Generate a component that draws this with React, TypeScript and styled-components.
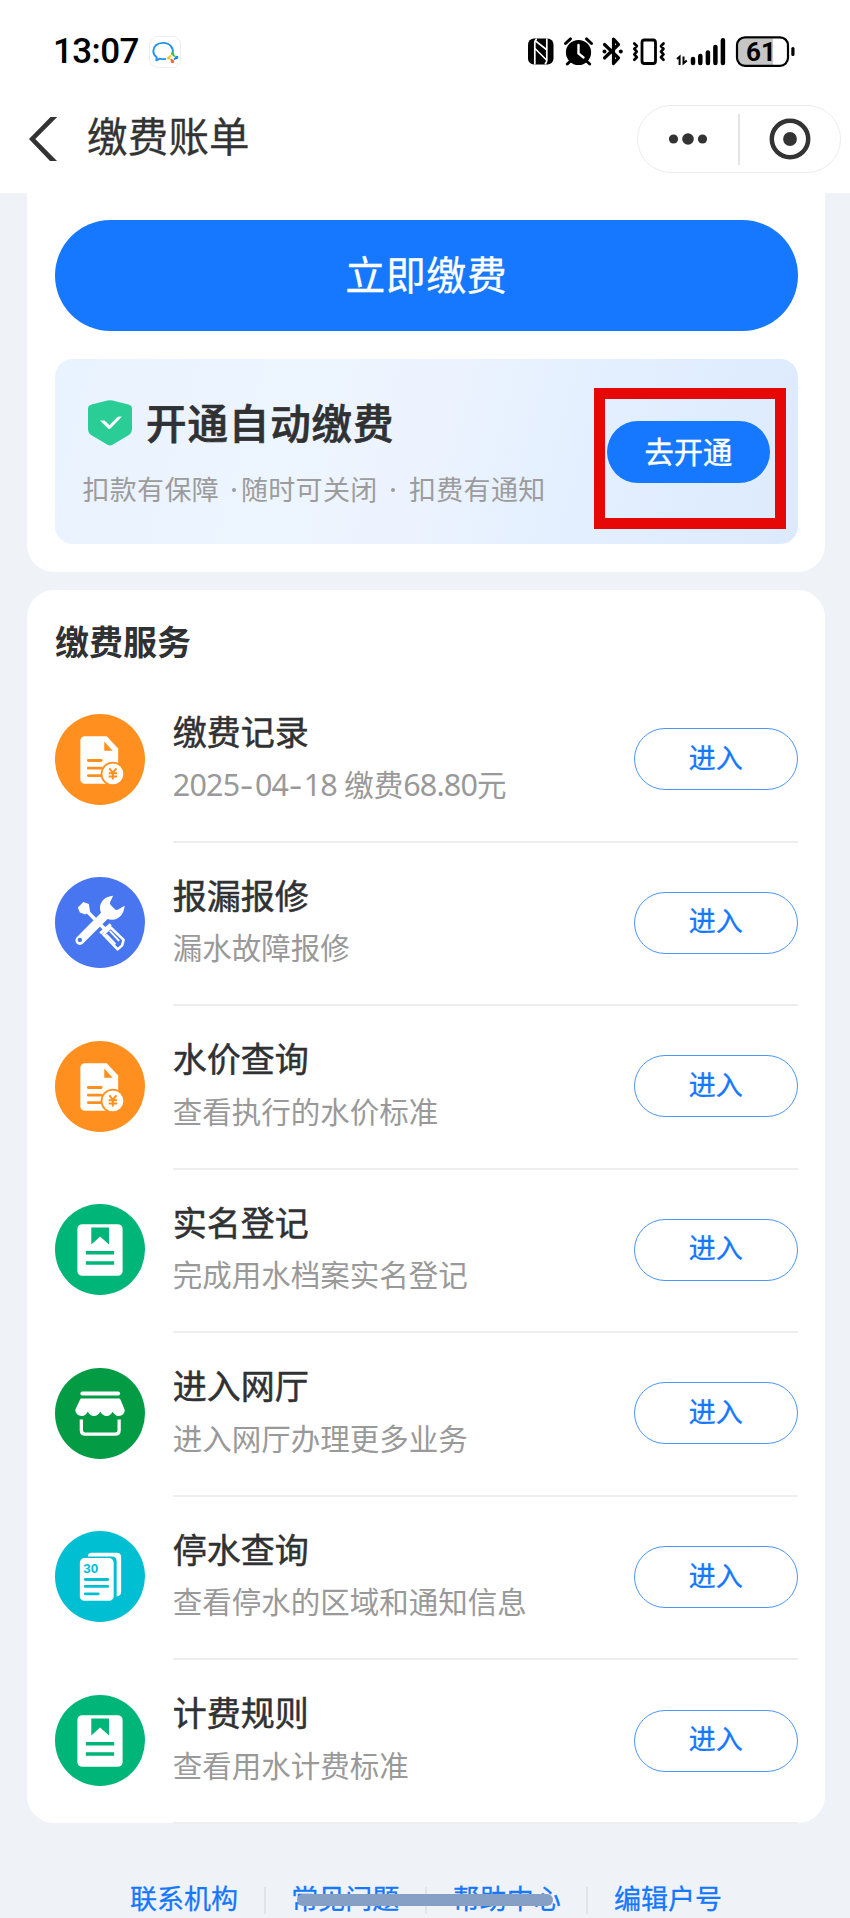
import React from 'react';
import styled, { createGlobalStyle } from 'styled-components';

const GlobalStyle = createGlobalStyle`
  *, *::before, *::after { box-sizing: border-box; }
  html, body { margin: 0; padding: 0; }
  body {
    background: #eff3f8;
    font-family: 'Noto Sans CJK SC', sans-serif;
    color: #303133;
    overflow: hidden;
  }
`;

const Page = styled.div`
  position: relative;
  width: 850px;
  height: 1918px;
  overflow: hidden;
  background: #eff3f8;
`;

const Header = styled.header`
  height: 193px;
  background: #fff;
`;

const StatusBar = styled.div`
  height: 104.5px;
  display: flex;
  align-items: center;
  padding: 0 55px 0 53px;
`;

const Clock = styled.div`
  font-family: Roboto, sans-serif;
  font-weight: 500;
  font-size: 35px;
  line-height: 40px;
  letter-spacing: -0.6px;
  width: 96px;
  white-space: nowrap;
  color: #000;
`;

const StatusIcons = styled.div`
  display: flex;
  align-items: center;
  margin-left: auto;
`;

const NavBar = styled.div`
  height: 69px;
  display: flex;
  align-items: center;
  padding: 0 9px 0 29px;
`;

const NavTitle = styled.h1`
  margin: 0 0 0 29px;
  padding-bottom: 8px;
  font-weight: 400;
  font-size: 40.5px;
  line-height: 60px;
  letter-spacing: 0.2px;
  color: #333;
  -webkit-text-stroke: 0.3px #333;
`;

const Capsule = styled.div`
  margin-left: auto;
  width: 204px;
  height: 68px;
  border: 1.5px solid #ececec;
  border-radius: 34px;
  display: flex;
  align-items: center;
`;

const CapsuleHalf = styled.div`
  flex: 1;
  display: flex;
  align-items: center;
  justify-content: center;
`;

const CapsuleLine = styled.div`
  width: 1.5px;
  height: 51px;
  background: #e4e4e4;
`;

const PayCard = styled.section`
  margin: 0 25px 0 27px;
  padding: 27px 27.5px 28px 28px;
  background: #fff;
  border-radius: 0 0 27px 27px;
  height: 378.5px;
`;

const PayButton = styled.button`
  display: block;
  width: 100%;
  height: 111px;
  margin: 0 0 28px;
  padding: 0 0 6px;
  border: 0;
  border-radius: 56px;
  background: #1677ff;
  color: #fff;
  font: 400 40px/60px 'Noto Sans CJK SC', sans-serif;
  letter-spacing: 0.5px;
  -webkit-text-stroke: 0.3px #fff;
`;

const Banner = styled.div`
  position: relative;
  height: 184.5px;
  border-radius: 18px;
  background: linear-gradient(105deg, #e9f2ff 0%, #edf5ff 32%, #ecf3fe 50%, #e4f0ff 68%, #dceafd 100%);
  display: flex;
  justify-content: space-between;
  padding-right: 27.3px;
`;

const BannerText = styled.div`
  padding: 34px 0 0 27.5px;
`;

const BannerHead = styled.div`
  display: flex;
  align-items: center;
  gap: 14px;
  height: 60px;
  padding-left: 5.5px;
`;

const BannerTitle = styled.h2`
  margin: 0;
  padding-bottom: 3px;
  font-weight: 500;
  font-size: 40.5px;
  line-height: 57px;
  letter-spacing: 0.9px;
  -webkit-text-stroke: 0.7px #303133;
`;

const BannerNotes = styled.div`
  display: flex;
  margin-top: 15.5px;
  font-size: 27px;
  line-height: 40px;
  letter-spacing: 0.3px;
  color: #9c9c9c;
`;

const NoteDot = styled.i<{ $before: number; $after: number }>`
  width: 4px;
  height: 4px;
  border-radius: 50%;
  background: #9c9c9c;
  margin: 19px ${(p) => p.$after}px 0 ${(p) => p.$before}px;
`;

const OpenButton = styled.button`
  width: 163.5px;
  height: 61.5px;
  margin-top: 62px;
  padding: 0 0 4px;
  border: 0;
  border-radius: 31px;
  background: #1677ff;
  color: #fff;
  font: 400 29.3px/50px 'Noto Sans CJK SC', sans-serif;
  -webkit-text-stroke: 0.4px #fff;
`;

const Highlight = styled.div`
  position: absolute;
  left: 539px;
  top: 28.5px;
  width: 192px;
  height: 141.5px;
  border: 11.5px solid #e60707;
`;

const ServiceCard = styled.section`
  margin: 18.5px 25px 0 27px;
  height: 1232.5px;
  padding: 0 27.5px 0 28px;
  background: #fff;
  border-radius: 27px;
`;

const ServiceHeading = styled.h2`
  margin: 0;
  height: 89.2px;
  padding-top: 34px;
  font-weight: 700;
  font-size: 34px;
  line-height: 34px;
`;

const Row = styled.div`
  display: flex;
  align-items: flex-start;
  height: 163.55px;
`;

const IconCircle = styled.div<{ $color: string }>`
  width: 90px;
  height: 91px;
  flex: none;
  margin-top: 34.5px;
  border-radius: 50%;
  background: ${(p) => p.$color};
  svg { display: block; width: 90px; height: 91px; }
`;

const RowBody = styled.div`
  flex: 1;
  height: 163.5px;
  margin-left: 27.8px;
  display: flex;
  justify-content: space-between;
  border-bottom: 2px solid #eee;
`;

const RowText = styled.div`
  padding-top: 28px;
`;

const RowTitle = styled.div`
  font-weight: 400;
  font-size: 34px;
  line-height: 48px;
  -webkit-text-stroke: 0.5px #303133;
`;

const RowNote = styled.div`
  margin-top: 7.5px;
  font-size: 29.5px;
  line-height: 40px;
  color: #999;
  white-space: nowrap;
`;

const Figures = styled.span`
  font-family: 'Noto Sans', 'Noto Sans CJK SC', sans-serif;
  font-size: 30.5px;
  line-height: 0;
  letter-spacing: -0.8px;
`;

const DateDash = styled.span`
  display: inline-block;
  width: 15.5px;
  text-align: center;
  letter-spacing: 0;
  transform: scaleX(1.35);
`;

const EnterButton = styled.button`
  width: 163.5px;
  height: 62px;
  margin-top: 49.1px;
  padding: 0 0 5px;
  border: 1.5px solid #4b95f8;
  border-radius: 32px;
  background: #fff;
  color: #1677ff;
  font: 400 27px/50px 'Noto Sans CJK SC', sans-serif;
  -webkit-text-stroke: 0.3px #1677ff;
`;

const Footer = styled.footer`
  display: flex;
  justify-content: center;
  margin-top: 55.5px;
  padding-left: 2px;
`;

const FooterLink = styled.a`
  width: 161.3px;
  text-align: center;
  font-size: 27px;
  line-height: 40px;
  color: #1677ff;
  -webkit-text-stroke: 0.3px #1677ff;
  position: relative;
  & + &::before {
    content: '';
    position: absolute;
    left: -1px;
    top: 9px;
    width: 2px;
    height: 27px;
    background: #e2e4e8;
  }
`;

const HomeIndicator = styled.div`
  position: absolute;
  left: 296.5px;
  top: 1894px;
  width: 256px;
  height: 11.5px;
  border-radius: 6px;
  background: #86a0c5;
`;

const ChatAppIcon = () => (
  <svg width="32" height="32" viewBox="0 0 32 32">
    <rect x="0.5" y="0.5" width="31" height="31" rx="8.5" fill="#fff" stroke="#ededed" />
    <path
      d="M23.6 17.2C24.9 12 21 6.9 14 6.9 8 6.9 4.3 10.6 4.3 15c0 2.600 1.300 4.800 3.400 6.200L7.300 24.300l3.500-1.700c2 .6 4.200.7 6.200.3"
      fill="none"
      stroke="#2590ee"
      strokeWidth="1.9"
      strokeLinejoin="round"
    />
    <g strokeWidth="1.900" strokeLinecap="round" fill="none">
      <path d="M23.200 17.800l2 2" stroke="#3ec23a" />
      <path d="M28 20.900l-2.400 2.200" stroke="#2384ea" />
      <path d="M24 25.600l-1.800-2" stroke="#f7642c" />
      <path d="M19.400 22.200l2-2.200" stroke="#fdc51d" />
    </g>
    <circle cx="23.600" cy="17.600" r="1.500" fill="#3ec23a" />
    <circle cx="27.600" cy="21.400" r="1.700" fill="#2384ea" />
    <circle cx="23.500" cy="25.500" r="1.700" fill="#f7642c" />
    <circle cx="19.600" cy="21.900" r="1.500" fill="#fdc51d" />
  </svg>
);

const StatusGlyphs = () => (
  <svg width="268" height="32" viewBox="527 37 268 32">
    <rect x="528" y="39.500" width="25.500" height="26" rx="6" fill="#000" />
    <path d="M534.800 65.500V43.500q0-2.500 2-3.500M546.800 39.500V61q0 3-2 4" fill="none" stroke="#fff" strokeWidth="1.700" />
    <path d="M535 41.500L547 51M535 49.500l12 12" stroke="#fff" strokeWidth="1.600" />
    <circle cx="578.500" cy="53.500" r="12.600" fill="#000" />
    <path d="M565.500 44.500l5-4.600M591.500 44.500l-5-4.600M570.500 62l-3.200 3M586.500 62l3.200 3" stroke="#000" strokeWidth="3" strokeLinecap="round" />
    <path d="M578.500 46v8.500l5 4" fill="none" stroke="#fff" strokeWidth="2.400" strokeLinecap="round" />
    <path d="M604.500 45.500l14 13.500-5 5.500V40l5 5.500-14 13.500" fill="none" stroke="#000" strokeWidth="3.200" strokeLinejoin="round" strokeLinecap="round" />
    <circle cx="604.500" cy="52.600" r="2" fill="#000" />
    <circle cx="620.800" cy="52.600" r="2" fill="#000" />
    <rect x="642" y="41" width="13.500" height="23.500" rx="2.500" fill="none" stroke="#000" strokeWidth="2.800" />
    <path
      d="M634.300 44.500l2.500 2.500-2.500 2.800 2.500 2.800-2.500 2.800 2.500 2.800-2.500 2.600M663.500 44.500l-2.500 2.500 2.500 2.800-2.500 2.800 2.500 2.800-2.500 2.800 2.500 2.600"
      fill="none"
      stroke="#000"
      strokeWidth="2.700"
      strokeLinejoin="round"
      strokeLinecap="round"
    />
    <path d="M677 60l2.600-2.300V66M686.800 61.500l-3.300 2.800V57.500" fill="none" stroke="#000" strokeWidth="2" />
    <g stroke="#000" strokeWidth="4.500" strokeLinecap="round">
      <path d="M693 60v4M700.300 57v7M707.900 53.500V64M715.400 48v16M722.900 41.300V64" />
    </g>
    <path d="M745 39.500h28v27h-28a7 7 0 0 1-7-7v-13a7 7 0 0 1 7-7z" fill="#c6c6c6" />
    <rect x="737" y="38.300" width="51" height="28.500" rx="8" fill="none" stroke="#000" strokeWidth="2.200" />
    <rect x="791.300" y="48" width="3.200" height="9" rx="1.500" fill="#000" />
    <text x="761" y="61.700" textAnchor="middle" fontFamily="Roboto, sans-serif" fontWeight="700" fontSize="26">
      61
    </text>
  </svg>
);

const BackIcon = () => (
  <svg width="29" height="44" viewBox="0 0 29 44">
    <path d="M21.500 0H28.200L6.300 22 28 44H21L0 22z" fill="#333" />
  </svg>
);

const MoreIcon = () => (
  <svg width="40" height="14" viewBox="0 0 40 14" fill="#333">
    <circle cx="5.500" cy="7" r="4.600" />
    <circle cx="20" cy="7" r="5.800" />
    <circle cx="34.500" cy="7" r="4.600" />
  </svg>
);

const TargetIcon = () => (
  <svg width="42" height="42" viewBox="0 0 42 42">
    <circle cx="21" cy="21" r="18.200" fill="none" stroke="#333" strokeWidth="4.500" />
    <circle cx="21" cy="21" r="6.900" fill="#333" />
  </svg>
);

const ShieldIcon = () => (
  <svg width="44" height="46" viewBox="0 0 44 46">
    <path d="M19.500.6q2.500-.9 5 0L40.500 4.600Q44 5.600 44 9v19.500q0 4.500-3.500 6.800L24.500 44.800q-2.500 1.500-5 0L3.500 35.300Q0 33 0 28.500V9Q0 5.600 3.500 4.600z" fill="#2bcd96" />
    <path d="M12 20.500h4.500l5 4.700 7.500-7.700q1-1 2.500-1h2.500L22.500 28.500q-1.200 1-2.400 0z" fill="#fff" />
  </svg>
);

const BillIcon = () => (
  <svg viewBox="0 0 90.5 91">
    <path d="M30 22h22L63.500 34.500V70H30a4.500 4.500 0 0 1-4.500-4.500v-39A4.500 4.500 0 0 1 30 22z" fill="#fff" />
    <path d="M49.500 27.500v9.300h8.500z" fill="#ff9020" />
    <path d="M33.500 46.500h13M33.500 54.200h13M33.500 61.700h13" stroke="#ff9020" strokeWidth="2.800" strokeLinecap="round" />
    <circle cx="58.200" cy="60" r="12.300" fill="#ff9020" />
    <circle cx="58.200" cy="60" r="10.500" fill="#fff" />
    <path d="M54.600 54.500l3.600 4.200 3.600-4.200M54 59.300h8.400M54 62.600h8.400M58.200 58.500v7" fill="none" stroke="#ff9020" strokeWidth="2" />
  </svg>
);

const ToolsIcon = () => (
  <svg viewBox="0 0 90.5 91">
    <path d="M30 32L56 58" fill="none" stroke="#fff" strokeWidth="3.600" />
    <path d="M23 30.500l5.500-5.500 5.500 1.800 1.300 7.700-5 3-5.300-2z" fill="#fff" />
    <path d="M25 63.500L50 38.500" stroke="#fff" strokeWidth="9" strokeLinecap="round" />
    <path d="M58.500 18.500c-8 .5-13 5.500-13.300 12-.2 7 5.500 12.500 12.500 12.200 6.200-.2 11.800-5.300 12.300-14l-6.500 3.800q-2 1-3.500-.5l-4-4q-1.500-1.500-.3-3.500z" fill="#fff" />
    <circle cx="25" cy="63" r="2.200" fill="#4876f0" />
    <path d="M48.500 57.500l7.500-7L69 63l-1.500 5.500-4.500 4z" fill="#4876f0" stroke="#fff" strokeWidth="2.600" strokeLinejoin="round" />
    <path d="M45.500 56.500l10.500-9" stroke="#fff" strokeWidth="3" />
    <path d="M55.500 54.500l8.500 9M51.800 57.800l8.500 9" stroke="#fff" strokeWidth="1.900" strokeLinecap="round" />
  </svg>
);

const BookIcon = () => (
  <svg viewBox="0 0 90.5 91">
    <rect x="22.500" y="20" width="45.500" height="52" rx="5" fill="#fff" />
    <path d="M36.500 23.500h17.800v17L45.400 32.500l-8.900 8z" fill="#00b578" />
    <path d="M31 48.700h28.500M31 59h28.500" stroke="#00b578" strokeWidth="3.500" />
  </svg>
);

const ShopIcon = () => (
  <svg viewBox="0 0 90.5 91">
    <rect x="25.500" y="23.500" width="40" height="4" rx="2" fill="#fff" />
    <path d="M27 30.500h37q1.500 0 2 1.500l4 9.500c.5 4-2.500 6.500-6 6.500-3 0-4.500-2-6-4.300-1.500 2.300-3.300 4.300-6 4.300-3 0-5-2-6.500-4.300C44 46 42 48 39.300 48c-3 0-4.800-2-6.300-4.300C31.500 46 30 48 27 48c-3.500 0-6.800-2.500-6.500-6.500L25 32q.5-1.500 2-1.500z" fill="#fff" />
    <path d="M26.500 51.500v10.800q0 4 4 4h30q4 0 4-4V51.500" fill="none" stroke="#fff" strokeWidth="3.300" />
  </svg>
);

const NoticeIcon = () => (
  <svg viewBox="0 0 90.5 91">
    <path d="M33 25.500q0-4 4-4h25q4.500 0 4.500 4.500v35q0 4-4.500 4.500V30.500q0-5-5-5z" fill="#fff" />
    <rect x="25" y="27" width="34" height="43" rx="4.500" fill="#fff" />
    <text x="36" y="42.300" textAnchor="middle" fontFamily="Liberation Sans, Arial, sans-serif" fontWeight="700" fontSize="13.500" fill="#00bfd3">
      30
    </text>
    <path d="M30.500 48.500h22.500M30.500 55.500h22.500M30.500 63h13" stroke="#00bfd3" strokeWidth="2.800" strokeLinecap="round" />
  </svg>
);

type Service = {
  title: string;
  note: React.ReactNode;
  color: string;
  icon: React.ReactNode;
};

const services: Service[] = [
  {
    title: '缴费记录',
    note: (
      <>
        <Figures>
          2025<DateDash>-</DateDash>04<DateDash>-</DateDash>18{' '}
        </Figures>
        缴费<Figures>68.80</Figures>元
      </>
    ),
    color: '#ff9020',
    icon: <BillIcon />,
  },
  { title: '报漏报修', note: '漏水故障报修', color: '#4876f0', icon: <ToolsIcon /> },
  { title: '水价查询', note: '查看执行的水价标准', color: '#ff9020', icon: <BillIcon /> },
  { title: '实名登记', note: '完成用水档案实名登记', color: '#00b578', icon: <BookIcon /> },
  { title: '进入网厅', note: '进入网厅办理更多业务', color: '#049b45', icon: <ShopIcon /> },
  { title: '停水查询', note: '查看停水的区域和通知信息', color: '#00bfd3', icon: <NoticeIcon /> },
  { title: '计费规则', note: '查看用水计费标准', color: '#00b578', icon: <BookIcon /> },
];

const footerLinks = ['联系机构', '常见问题', '帮助中心', '编辑户号'];

export default function App() {
  return (
    <Page>
      <GlobalStyle />
      <Header>
        <StatusBar>
          <Clock>13:07</Clock>
          <ChatAppIcon />
          <StatusIcons>
            <StatusGlyphs />
          </StatusIcons>
        </StatusBar>
        <NavBar>
          <BackIcon />
          <NavTitle>缴费账单</NavTitle>
          <Capsule>
            <CapsuleHalf>
              <MoreIcon />
            </CapsuleHalf>
            <CapsuleLine />
            <CapsuleHalf>
              <TargetIcon />
            </CapsuleHalf>
          </Capsule>
        </NavBar>
      </Header>

      <PayCard>
        <PayButton>立即缴费</PayButton>
        <Banner>
          <BannerText>
            <BannerHead>
              <ShieldIcon />
              <BannerTitle>开通自动缴费</BannerTitle>
            </BannerHead>
            <BannerNotes>
              <span>扣款有保障</span>
              <NoteDot $before={13} $after={5} />
              <span>随时可关闭</span>
              <NoteDot $before={13} $after={14.5} />
              <span>扣费有通知</span>
            </BannerNotes>
          </BannerText>
          <OpenButton>去开通</OpenButton>
          <Highlight />
        </Banner>
      </PayCard>

      <ServiceCard>
        <ServiceHeading>缴费服务</ServiceHeading>
        {services.map((s) => (
          <Row key={s.title}>
            <IconCircle $color={s.color}>{s.icon}</IconCircle>
            <RowBody>
              <RowText>
                <RowTitle>{s.title}</RowTitle>
                <RowNote>{s.note}</RowNote>
              </RowText>
              <EnterButton>进入</EnterButton>
            </RowBody>
          </Row>
        ))}
      </ServiceCard>

      <Footer>
        {footerLinks.map((label) => (
          <FooterLink key={label}>{label}</FooterLink>
        ))}
      </Footer>
      <HomeIndicator />
    </Page>
  );
}
